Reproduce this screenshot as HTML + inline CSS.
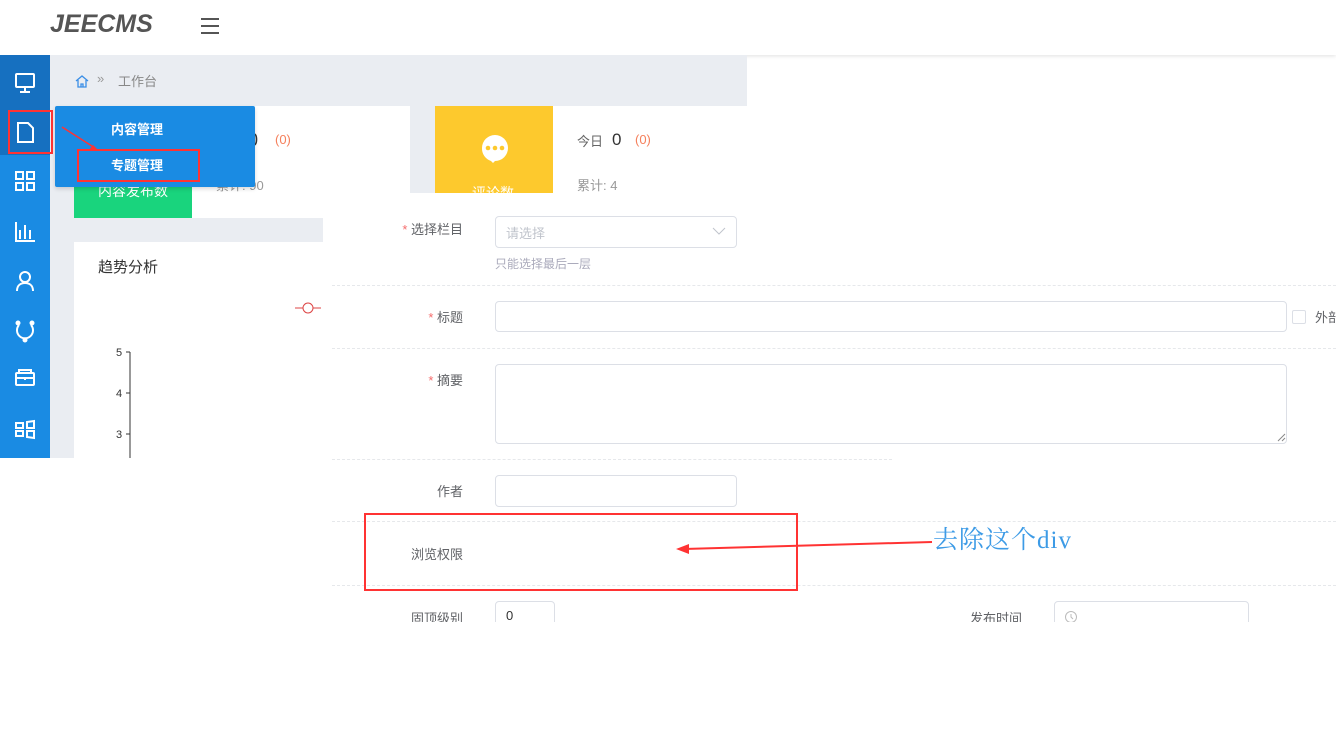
<!DOCTYPE html>
<html><head><meta charset="utf-8"><style>
*{margin:0;padding:0;box-sizing:border-box}
body{width:1336px;height:755px;background:#fff;position:relative;overflow:hidden;font-family:"Liberation Sans","Noto Sans CJK SC",sans-serif;font-size:13px;color:#606266;white-space:nowrap}
.a{position:absolute}
.inp{position:absolute;border:1px solid #dcdfe6;border-radius:4px;background:#fff}
.dash{position:absolute;height:0;border-top:1px dashed #e6e8eb}
.lbl{position:absolute;font-size:13px;color:#606266;text-align:right}
.st{color:#f56c6c}
</style></head><body>
<div class="a" style="left:0;top:0;width:1336px;height:55px;background:#fff;box-shadow:0 1px 4px rgba(0,0,0,.12)"></div>
<div class="a" style="left:50px;top:10px;font-size:25px;font-weight:bold;font-style:italic;color:#555">JEECMS</div>
<div class="a" style="left:201px;top:18px;width:18px;height:2px;background:#555;box-shadow:0 7px 0 #555,0 14px 0 #555"></div>

<div class="a" style="left:0;top:55px;width:50px;height:403px;background:#1a8be3"></div>
<div class="a" style="left:0;top:55px;width:50px;height:100px;background:#1670c0"></div>
<div class="a" style="left:50px;top:55px;width:697px;height:403px;background:#eaedf2"></div>
<div class="a" style="left:8px;top:110px;width:45px;height:44px;border:2px solid #f33"></div>

<svg class="a" style="left:0;top:55px" width="50" height="403" fill="none" stroke="#fff" stroke-width="2">
<rect x="16" y="19" width="18" height="13" rx="1"/><path d="M25 32v4M20 37h10"/>
<path d="M18 68h10l5 5v14H18z"/>
<rect x="16" y="117" width="7" height="7"/><rect x="27" y="117" width="7" height="7"/><rect x="16" y="128" width="7" height="7"/><rect x="27" y="128" width="7" height="7"/>
<path d="M16 167v19h19M20 175v9M25 170v14M30 175v9"/>
<circle cx="25" cy="222" r="5"/><path d="M17 236c0-6 4-8 8-8s8 2 8 8"/>
<path d="M19 270a8 8 0 1 0 12 0"/><circle cx="18" cy="268" r="1.5" fill="#fff"/><circle cx="32" cy="268" r="1.5" fill="#fff"/><circle cx="25" cy="285" r="1.5" fill="#fff"/>
<rect x="16" y="318" width="18" height="12" rx="1"/><path d="M19 318v-3h12v3M16 323h18M25 322v3"/>
<path d="M16 368h7v5h-7zM16 376h7v5h-7zM27 367l7-1v7h-7zM27 376h7v7l-7-1z"/>
</svg>

<svg class="a" style="left:74px;top:73px" width="16" height="16" fill="none" stroke="#3a8ee6" stroke-width="1.3"><path d="M2 8l6-5 6 5M4 7v7h8V7M7 14v-3h2v3"/></svg>
<div class="a" style="left:97px;top:71px;color:#999;font-size:13px">»</div>
<div class="a" style="left:118px;top:71px;color:#888;font-size:13px">工作台</div>

<div class="a" style="left:74px;top:106px;width:336px;height:112px;background:#fff"></div>
<div class="a" style="left:74px;top:150px;width:118px;height:68px;background:#19d47d"></div>
<div class="a" style="left:98px;top:181px;color:#fff;font-size:14px">内容发布数</div>
<div class="a" style="left:248px;top:130px;font-size:18px;color:#333">0</div>
<div class="a" style="left:275px;top:132px;font-size:13px;color:#f5805c">(0)</div>
<div class="a" style="left:216px;top:175px;font-size:13px;color:#999">累计: 90</div>

<div class="a" style="left:55px;top:106px;width:200px;height:81px;background:#1a8be3;border-radius:2px;box-shadow:0 2px 4px rgba(0,0,0,.15)"></div>
<div class="a" style="left:111px;top:119px;color:#fff;font-size:13px;font-weight:bold">内容管理</div>
<div class="a" style="left:111px;top:155px;color:#fff;font-size:13px;font-weight:bold">专题管理</div>
<div class="a" style="left:77px;top:149px;width:123px;height:33px;border:2px solid #f33"></div>
<svg class="a" style="left:55px;top:120px" width="50" height="40"><path d="M7 7L40 28" stroke="#f33" stroke-width="1.5"/><path d="M44 31l-10-1 4-5z" fill="#f33"/></svg>

<div class="a" style="left:435px;top:106px;width:312px;height:87px;background:#fff"></div>
<div class="a" style="left:435px;top:106px;width:118px;height:87px;background:#fdc92d"></div>
<svg class="a" style="left:477px;top:132px" width="36" height="36"><path d="M5 16a13 13 0 1 1 26 0a13 13 0 0 1-13 13l-2 2-2-2A13 13 0 0 1 5 16" fill="#fff"/><circle cx="11" cy="16" r="2.3" fill="#fdc92d"/><circle cx="18" cy="16" r="2.3" fill="#fdc92d"/><circle cx="25" cy="16" r="2.3" fill="#fdc92d"/></svg>
<div class="a" style="left:472px;top:185px;color:#fff;font-size:14px;height:8px;overflow:hidden;line-height:16px">评论数</div>
<div class="a" style="left:577px;top:131px;font-size:13px;color:#666">今日</div>
<div class="a" style="left:612px;top:130px;font-size:17px;color:#333">0</div>
<div class="a" style="left:635px;top:132px;font-size:13px;color:#f5805c">(0)</div>
<div class="a" style="left:577px;top:175px;font-size:13px;color:#999">累计: 4</div>

<div class="a" style="left:74px;top:242px;width:249px;height:216px;background:#fff"></div>
<div class="a" style="left:98px;top:256px;font-size:15px;color:#333">趋势分析</div>
<svg class="a" style="left:290px;top:300px" width="34" height="16"><path d="M5 8h26" stroke="#d44" stroke-width="1"/><circle cx="18" cy="8" r="5" fill="#fff" stroke="#d44"/></svg>
<svg class="a" style="left:100px;top:340px" width="40" height="118" font-size="11" fill="#333"><path d="M30 12V118M26 12h4M26 53h4M26 94h4" stroke="#333"/><text x="16" y="16">5</text><text x="16" y="57">4</text><text x="16" y="98">3</text></svg>

<div class="a" style="left:323px;top:193px;width:1013px;height:429px;background:#fff"></div>
<div class="dash" style="left:332px;top:285px;width:1004px"></div>
<div class="dash" style="left:332px;top:348px;width:1004px"></div>
<div class="dash" style="left:332px;top:459px;width:560px"></div>
<div class="dash" style="left:332px;top:521px;width:1004px"></div>
<div class="dash" style="left:332px;top:585px;width:1004px"></div>

<div class="lbl" style="left:380px;width:83px;top:219px"><span class="st">* </span>选择栏目</div>
<div class="inp" style="left:495px;top:216px;width:242px;height:32px"></div>
<div class="a" style="left:506px;top:223px;color:#c0c4cc">请选择</div>
<svg class="a" style="left:712px;top:226px" width="14" height="10"><path d="M1 2l6 6 6-6" stroke="#c0c4cc" fill="none"/></svg>
<div class="a" style="left:495px;top:255px;font-size:12px;color:#aab">只能选择最后一层</div>

<div class="lbl" style="left:380px;width:83px;top:307px"><span class="st">* </span>标题</div>
<div class="inp" style="left:495px;top:301px;width:792px;height:31px"></div>
<div class="a" style="left:1292px;top:310px;width:14px;height:14px;border:1px solid #dcdfe6;border-radius:2px"></div>
<div class="a" style="left:1315px;top:307px">外部</div>

<div class="lbl" style="left:380px;width:83px;top:370px"><span class="st">* </span>摘要</div>
<div class="inp" style="left:495px;top:364px;width:792px;height:80px"></div>
<svg class="a" style="left:1277px;top:433px" width="9" height="9"><path d="M1 8L8 1M5 8L8 5" stroke="#888"/></svg>

<div class="lbl" style="left:380px;width:83px;top:481px">作者</div>
<div class="inp" style="left:495px;top:475px;width:242px;height:32px"></div>

<div class="lbl" style="left:380px;width:83px;top:544px">浏览权限</div>
<div class="a" style="left:364px;top:513px;width:434px;height:78px;border:2px solid #f33"></div>
<svg class="a" style="left:670px;top:535px" width="270" height="25"><path d="M14 14L262 7" stroke="#f33" stroke-width="2"/><path d="M6 14l13-5v10z" fill="#f33"/></svg>
<div class="a" style="left:933px;top:520px;font-size:25px;letter-spacing:1px;color:#3d9be6;font-family:'Liberation Serif','Noto Serif CJK SC',serif">去除这个div</div>

<div class="a" style="left:323px;top:601px;width:1013px;height:21px;overflow:hidden">
<div class="lbl" style="left:57px;width:83px;top:7px">固顶级别</div>
<div class="inp" style="left:172px;top:0;width:60px;height:32px"></div>
<div class="a" style="left:183px;top:7px;color:#333">0</div>
<div class="lbl" style="left:616px;width:83px;top:7px">发布时间</div>
<div class="inp" style="left:731px;top:0;width:195px;height:32px"></div>
<svg class="a" style="left:741px;top:9px" width="14" height="14"><circle cx="7" cy="7" r="5.5" stroke="#bbb" fill="none"/><path d="M7 4v3l2 2" stroke="#bbb" fill="none"/></svg>
</div>
</body></html>
